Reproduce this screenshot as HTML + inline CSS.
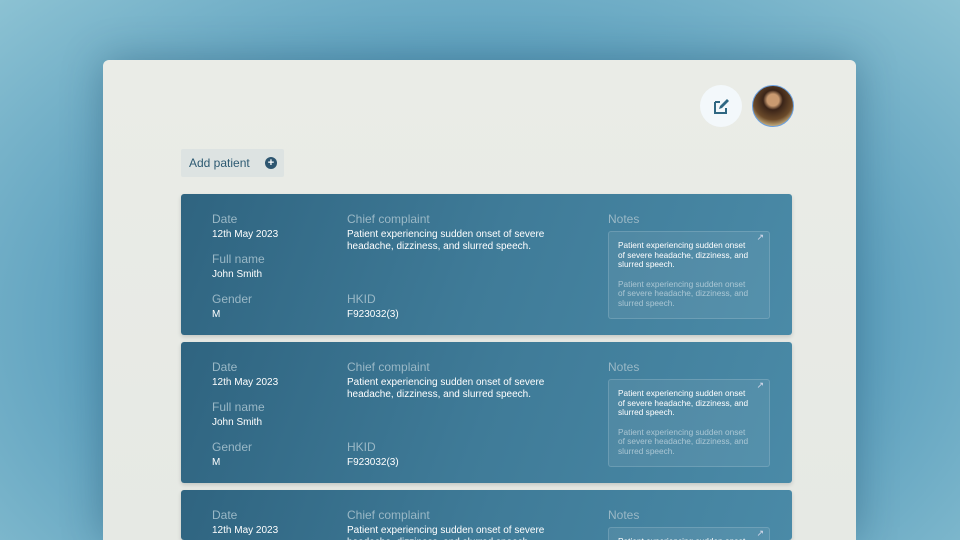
<!DOCTYPE html><html><head><style>
*{margin:0;padding:0;box-sizing:border-box}
html,body{width:960px;height:540px;overflow:hidden}
body{font-family:"Liberation Sans",sans-serif}
.wrap{position:relative;width:960px;height:540px;overflow:hidden;background:radial-gradient(ellipse at 50% 60%,#3f85a6 0%,#5c9fbd 55%,#8cc2d3 100%)}
.panel{position:absolute;left:103px;top:60px;width:753px;height:480px;background:linear-gradient(180deg,#eaece7,#e6e9e4);border-radius:6px 6px 0 0;box-shadow:0 0 40px rgba(20,60,90,.35)}
.edit{position:absolute;left:700px;top:85px;width:42px;height:42px;border-radius:50%;background:#f3f8fb}
.av{position:absolute;left:752px;top:85px;width:42px;height:42px;border-radius:50%;border:1px solid #6aa0e0;background:radial-gradient(circle at 50% 35%,#c99a70 0 18%,#3a2418 30%,#6b4a2a 60%,#c8b080 80%,#5a3a20 100%)}
.add{position:absolute;left:181px;top:149px;width:103px;height:28px;background:#dde3e2;border-radius:2px;font-size:12px;color:#2d5a72;padding:7px 0 0 8px}
.add i{position:absolute;left:84px;top:8px;width:12px;height:12px;border-radius:50%;background:#2e5670;color:#fff;font-style:normal;font-size:11px;line-height:12px;text-align:center;font-weight:bold}
.card{position:absolute;left:181px;width:611px;height:141px;overflow:hidden;border-radius:3px;background:linear-gradient(110deg,#2f6480 0%,#3f7b98 50%,#4a8aa7 100%);box-shadow:0 2px 4px rgba(0,0,0,.15)}
.l{position:absolute;font-size:12px;color:#9ab8c6}
.v{position:absolute;font-size:10px;color:#fff;line-height:12px}
.nb{position:absolute;left:427px;top:37px;width:162px;height:88px;border:1px solid rgba(255,255,255,.15);background:rgba(255,255,255,.07);border-radius:3px;padding:9px 9px;font-size:8.3px;line-height:9.6px;color:#fff}
.nb .f{margin-top:10px;color:rgba(255,255,255,.5)}
.nb b{position:absolute;right:5px;top:1px;font-size:9px;font-weight:normal;color:#dde}
</style></head><body><div class="wrap">
<div class="panel"></div>
<div class="edit"><svg width="42" height="42" viewBox="0 0 42 42"><path d="M15 17h5M15 17v11h11v-5" stroke="#2f6782" stroke-width="2" fill="none"/><path d="M19 24l1-3 7-7 2 2-7 7z" fill="#2f6782"/></svg></div>
<div class="av"></div>
<div class="add">Add patient<i>+</i></div>
<div id="c"></div>
</div>
<script>
var h='';[194,342,490].forEach(function(t){h+='<div class="card" style="top:'+t+'px;height:'+(t==490?50:141)+'px"><div class="l" style="left:31px;top:18px">Date</div><div class="v" style="left:31px;top:35px">12th May 2023</div><div class="l" style="left:31px;top:58px">Full name</div><div class="v" style="left:31px;top:75px">John Smith</div><div class="l" style="left:31px;top:98px">Gender</div><div class="v" style="left:31px;top:115px">M</div><div class="l" style="left:166px;top:18px">Chief complaint</div><div class="v" style="left:166px;top:35px">Patient experiencing sudden onset of severe<br>headache, dizziness, and slurred speech.</div><div class="l" style="left:166px;top:98px">HKID</div><div class="v" style="left:166px;top:115px">F923032(3)</div><div class="l" style="left:427px;top:18px">Notes</div><div class="nb"><b>↗</b>Patient experiencing sudden onset<br>of severe headache, dizziness, and<br>slurred speech.<div class="f">Patient experiencing sudden onset<br>of severe headache, dizziness, and<br>slurred speech.</div></div></div>'});document.getElementById('c').innerHTML=h;
</script>
</body></html>
